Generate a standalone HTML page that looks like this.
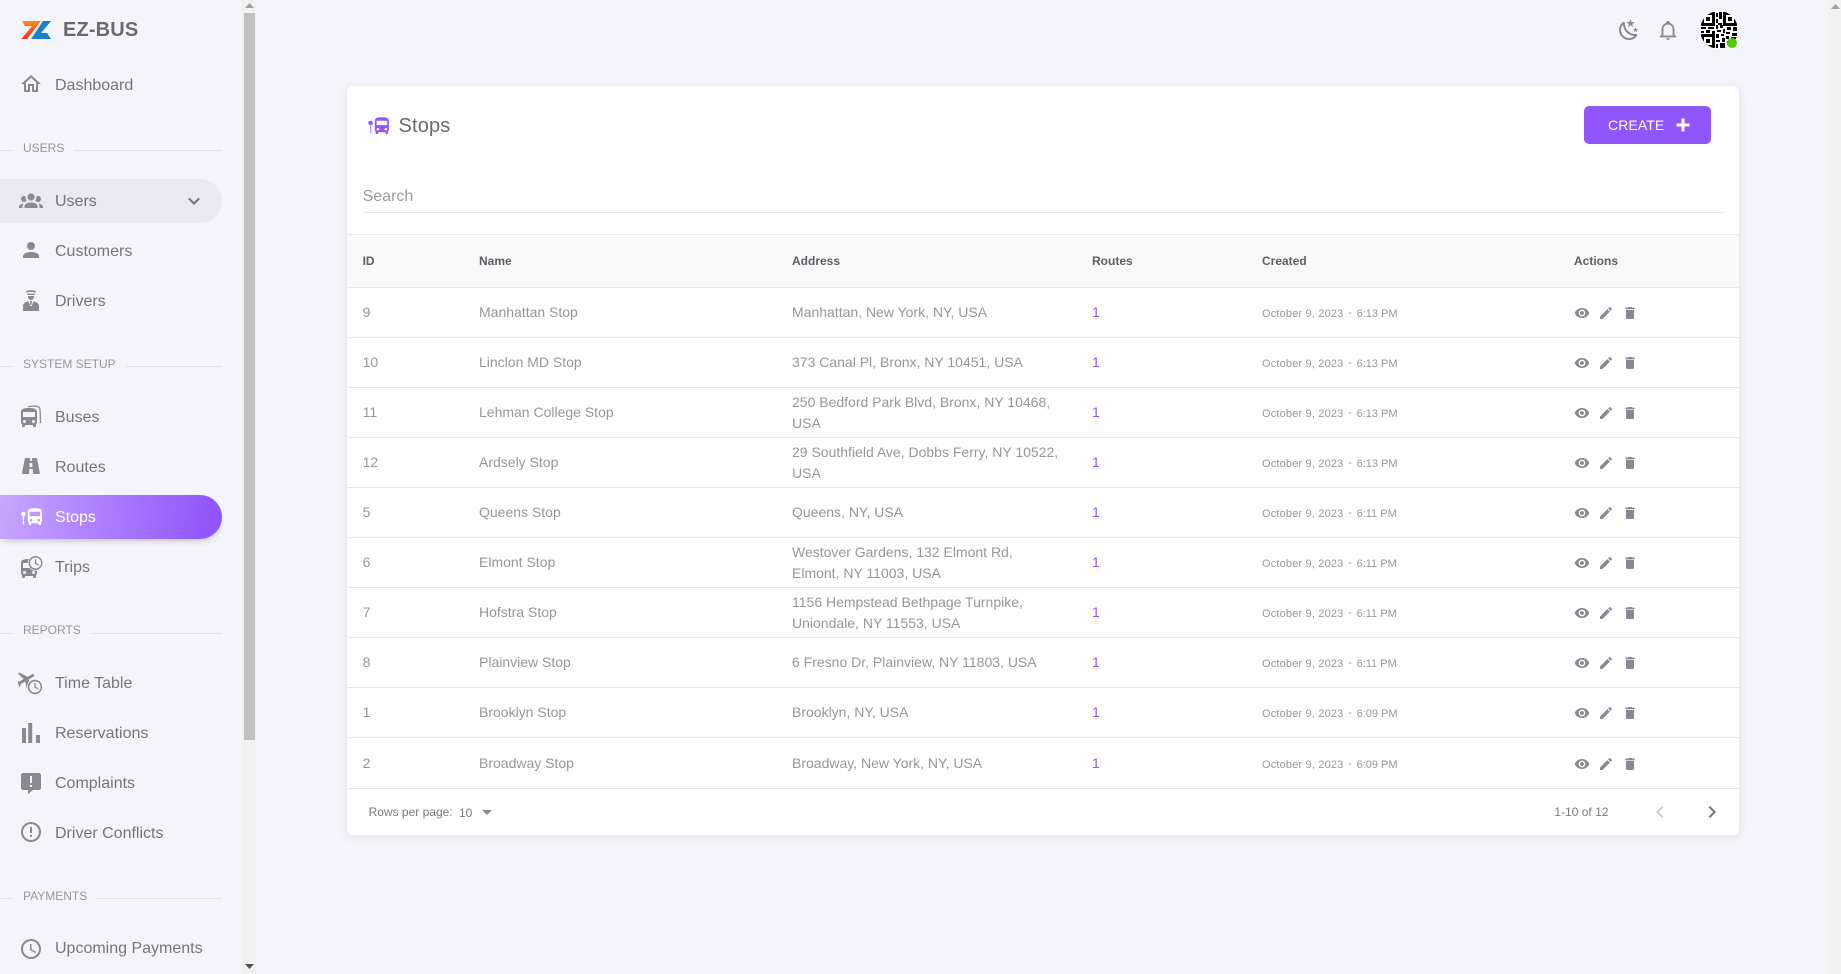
<!DOCTYPE html>
<html lang="en"><head><meta charset="utf-8"><title>Stops</title>
<style>
html,body{margin:0;padding:0;width:1841px;height:974px;overflow:hidden;background:#f4f5fa;font-family:"Liberation Sans",sans-serif;color:rgba(58,53,65,.68)}
div,span,svg{position:absolute}
.t{white-space:nowrap}
.nav{left:55px;height:24px;line-height:24px;font-size:16px;white-space:nowrap}
.sec{left:23px;height:16px;line-height:16px;font-size:12px;color:rgba(58,53,65,.5);white-space:nowrap}
.ln{height:1px;background:#e0e0e6}
.ic{fill:#8c8893}
.card{left:347px;top:86px;width:1392px;height:749px;background:#fff;border-radius:6px;box-shadow:0 2px 10px 0 rgba(58,53,65,.1)}
.hd{top:254px;height:14px;line-height:14px;font-size:12px;font-weight:bold;color:rgba(58,53,65,.8);white-space:nowrap}
.r{left:347px;width:1392px;height:49px;border-bottom:1px solid #e8e8e9;background:#fff}
.c{top:0;height:49px;line-height:49px;font-size:14px;white-space:nowrap;color:rgba(58,53,65,.53)}
.a{top:4px;height:42px;line-height:21px;font-size:14px;white-space:nowrap;color:rgba(58,53,65,.53)}
.id{left:15.6px}.nm{left:132px}.ad{left:445px}
.ro{left:745px;color:#9155fd}
.cr{left:915px;font-size:11px;letter-spacing:.17px;top:2px}
.cr i{font-style:normal;letter-spacing:0}
.cr u{text-decoration:none;position:relative;top:-1px;margin:0 1.5px;letter-spacing:0}
.b{width:16px;height:16px;top:17px;fill:#8c8893}
.ev{left:1227px}.ep{left:1251px}.et{left:1275px}
</style></head><body>
<svg width="0" height="0" style="left:0;top:0"><defs>
<symbol id="bus" viewBox="0 0 24 24"><path d="M18,11H6V6H18M16.5,17A1.5,1.5 0 0,1 15,15.5A1.5,1.5 0 0,1 16.5,14A1.5,1.5 0 0,1 18,15.5A1.5,1.5 0 0,1 16.5,17M7.5,17A1.5,1.5 0 0,1 6,15.5A1.5,1.5 0 0,1 7.5,14A1.5,1.5 0 0,1 9,15.5A1.5,1.5 0 0,1 7.5,17M4,16C4,16.88 4.39,17.67 5,18.22V20A1,1 0 0,0 6,21H7A1,1 0 0,0 8,20V19H16V20A1,1 0 0,0 17,21H18A1,1 0 0,0 19,20V18.22C19.61,17.67 20,16.88 20,16V6C20,2.5 16.42,2 12,2C7.58,2 4,2.5 4,6V16Z"/></symbol>
<symbol id="eye" viewBox="0 0 24 24"><path d="M12 4.5C7 4.5 2.73 7.61 1 12c1.73 4.39 6 7.5 11 7.5s9.27-3.11 11-7.5c-1.73-4.39-6-7.5-11-7.5zM12 17c-2.76 0-5-2.24-5-5s2.24-5 5-5 5 2.24 5 5-2.24 5-5 5zm0-8c-1.66 0-3 1.34-3 3s1.34 3 3 3 3-1.34 3-3-1.34-3-3-3z"/></symbol>
<symbol id="pen" viewBox="0 0 24 24"><path d="M20.71,7.04C21.1,6.65 21.1,6 20.71,5.63L18.37,3.29C18,2.9 17.35,2.9 16.96,3.29L15.12,5.12L18.87,8.87M3,17.25V21H6.75L17.81,9.93L14.06,6.18L3,17.25Z"/></symbol>
<symbol id="del" viewBox="0 0 24 24"><path d="M19,4H15.5L14.5,3H9.5L8.5,4H5V6H19V4M6,19A2,2 0 0,0 8,21H16A2,2 0 0,0 18,19V7H6V19Z"/></symbol>
</defs></svg>

<!-- sidebar -->
<svg style="left:21px;top:20px" width="31" height="20" viewBox="21 20 31 20"><defs><linearGradient id="og" x1="0" y1="0" x2="0" y2="1"><stop offset="0" stop-color="#ff8c1a"/><stop offset="1" stop-color="#ee2a1e"/></linearGradient></defs><polygon fill="url(#og)" points="22,21 41,21 27,39 21.5,39 32,26 25,26"/><polygon fill="#1a80c8" points="43,21 51,21 41,33 47,33 51,39 31,39"/></svg>
<div class="t" style="left:63px;top:18px;height:24px;line-height:24px;font-size:20px;font-weight:bold;letter-spacing:.15px;color:#6b6873">EZ-BUS</div>

<svg class="ic" style="left:19px;top:72px" width="24" height="24" viewBox="0 0 24 24"><path d="M12 5.69L17 10.19V18H15V12H9V18H7V10.19L12 5.69M12 3L2 12H5V20H11V14H13V20H19V12H22"/></svg>
<div class="nav" style="top:74px">Dashboard</div>

<div class="ln" style="left:0;top:150px;width:13px"></div><div class="sec" style="top:140px">USERS</div><div class="ln" style="left:74px;top:150px;width:148px"></div>

<div style="left:0;top:179px;width:222px;height:44px;background:#e9eaef;border-radius:0 22px 22px 0"></div>
<svg class="ic" style="left:19px;top:188px" width="24" height="24" viewBox="0 0 24 24"><path d="M12,5.5A3.5,3.5 0 0,1 15.5,9A3.5,3.5 0 0,1 12,12.5A3.5,3.5 0 0,1 8.5,9A3.5,3.5 0 0,1 12,5.5M5,8C5.56,8 6.08,8.15 6.53,8.42C6.38,9.85 6.8,11.27 7.66,12.38C7.16,13.34 6.16,14 5,14A3,3 0 0,1 2,11A3,3 0 0,1 5,8M19,8A3,3 0 0,1 22,11A3,3 0 0,1 19,14C17.84,14 16.84,13.34 16.34,12.38C17.2,11.27 17.62,9.85 17.47,8.42C17.92,8.15 18.44,8 19,8M5.5,18.25C5.5,16.18 8.41,14.5 12,14.5C15.59,14.5 18.5,16.18 18.5,18.25V20H5.5V18.25M0,20V18.5C0,17.11 1.89,15.94 4.45,15.6C3.86,16.28 3.5,17.22 3.5,18.25V20H0M24,20H20.5V18.25C20.5,17.22 20.14,16.28 19.55,15.6C22.11,15.94 24,17.11 24,18.5V20Z"/></svg>
<div class="nav" style="top:190px">Users</div>
<svg style="left:182px;top:189px;fill:#75727b" width="24" height="24" viewBox="0 0 24 24"><path d="M7.41,8.58L12,13.17L16.59,8.58L18,10L12,16L6,10L7.41,8.58Z"/></svg>

<svg class="ic" style="left:19px;top:238px" width="24" height="24" viewBox="0 0 24 24"><path d="M12,4A4,4 0 0,1 16,8A4,4 0 0,1 12,12A4,4 0 0,1 8,8A4,4 0 0,1 12,4M12,14C16.42,14 20,15.79 20,18V20H4V18C4,15.79 7.58,14 12,14Z"/></svg>
<div class="nav" style="top:240px">Customers</div>

<svg class="ic" style="left:19px;top:288px" width="24" height="24" viewBox="0 0 24 24"><path d="M7,3.2C8.5,2 15.5,2 17,3.2L16.4,4.6C14.5,3.8 9.5,3.8 7.6,4.6ZM8,5.6H16L15.4,7H8.6ZM9,8H15C15,10.2 13.8,12 12,12C10.2,12 9,10.2 9,8ZM4,23V18C4,15.5 6.5,13.8 9.5,13.2L11.3,18H12.7L14.5,13.2C17.5,13.8 20,15.5 20,18V23ZM11,13H13L12.6,17H11.4Z"/></svg>
<div class="nav" style="top:290px">Drivers</div>

<div class="ln" style="left:0;top:366px;width:13px"></div><div class="sec" style="top:356px">SYSTEM SETUP</div><div class="ln" style="left:126px;top:366px;width:96px"></div>

<svg class="ic" style="left:18px;top:404px" width="26" height="26" viewBox="0 0 26 26"><use href="#bus" x="-1" y="2" width="24" height="24"/><path d="M10,2.8C15,1.8 20.5,1.8 21.6,4C22.2,5.2 22.4,7 22.4,19" fill="none" stroke="#8c8893" stroke-width="1.3"/></svg>
<div class="nav" style="top:406px">Buses</div>

<svg class="ic" style="left:19px;top:454px" width="24" height="24" viewBox="0 0 24 24"><path d="M18.1,4.8C18,4.3 17.6,4 17.1,4H13L13.2,7H10.8L11,4H6.8C6.3,4 5.9,4.4 5.8,4.8L3.1,18.8C3,19.4 3.5,20 4.1,20H10L10.3,15H13.7L14,20H19.8C20.4,20 20.9,19.4 20.8,18.8L18.1,4.8M10.4,13L10.6,9H13.2L13.4,13H10.4Z"/></svg>
<div class="nav" style="top:456px">Routes</div>

<div style="left:0;top:495px;width:222px;height:44px;background:linear-gradient(98deg,#c6a7fe,#9155fd 94%);border-radius:0 22px 22px 0;box-shadow:0 4px 8px -4px rgba(58,53,65,.42)"></div>
<svg style="left:20px;top:504px;fill:#fff" width="24" height="24" viewBox="0 0 24 24"><circle cx="3.4" cy="10" r="2.3"/><rect x="2.8" y="11" width="1.2" height="9.5"/><g transform="translate(4.3 2.5) scale(.88)"><use href="#bus" width="24" height="24"/></g></svg>
<div class="nav" style="top:506px;color:#fff">Stops</div>

<svg class="ic" style="left:18px;top:553px" width="26" height="26" viewBox="0 0 26 26"><g transform="translate(-1 4)"><use href="#bus" width="24" height="24"/></g><circle cx="17.5" cy="10" r="7.8" fill="#f4f5fa"/><path d="M17.5,3A7,7 0 1,1 17.4,3ZM17.5,4.5A5.5,5.5 0 1,0 17.6,4.5ZM16.9,6.2H18.2V10L20.9,11.7L20.3,12.7L16.9,10.7Z" fill-rule="evenodd"/></svg>
<div class="nav" style="top:556px">Trips</div>

<div class="ln" style="left:0;top:633px;width:13px"></div><div class="sec" style="top:622px">REPORTS</div><div class="ln" style="left:91px;top:633px;width:131px"></div>

<svg class="ic" style="left:18px;top:670px" width="26" height="26" viewBox="0 0 26 26"><g transform="translate(-1.5 -2) rotate(60 10 10) scale(.95)"><path d="M21,16V14L13,9V3.5A1.5,1.5 0 0,0 11.5,2A1.5,1.5 0 0,0 10,3.5V9L2,14V16L10,13.5V19L8,20.5V22L11.5,21L15,22V20.5L13,19V13.5L21,16Z"/></g><circle cx="17" cy="17" r="8" fill="#f4f5fa"/><path d="M17,9.8A7.2,7.2 0 1,1 16.9,9.8ZM17,11.4A5.6,5.6 0 1,0 17.1,11.4ZM16.3,13H17.7V16.7L20.5,18.4L19.8,19.5L16.3,17.4Z" fill-rule="evenodd"/></svg>
<div class="nav" style="top:672px">Time Table</div>

<svg class="ic" style="left:19px;top:720px" width="24" height="24" viewBox="0 0 24 24"><rect x="3" y="8" width="4" height="15"/><rect x="9.2" y="3" width="4" height="20"/><rect x="17" y="15" width="4" height="8"/></svg>
<div class="nav" style="top:722px">Reservations</div>

<svg class="ic" style="left:19px;top:770px" width="24" height="24" viewBox="0 0 24 24"><path d="M4,3H20C21.1,3 22,3.9 22,5V18C22,19.1 21.1,20 20,20H14L9,24V20H4C2.9,20 2,19.1 2,18V5C2,3.9 2.9,3 4,3M11,6V13H13V6H11M11,15V17H13V15H11Z" fill-rule="evenodd"/></svg>
<div class="nav" style="top:772px">Complaints</div>

<svg class="ic" style="left:19px;top:820px" width="24" height="24" viewBox="0 0 24 24"><path d="M11,15H13V17H11V15M11,7H13V13H11V7M12,2C6.47,2 2,6.5 2,12A10,10 0 0,0 12,22A10,10 0 0,0 22,12A10,10 0 0,0 12,2M12,20A8,8 0 0,1 4,12A8,8 0 0,1 12,4A8,8 0 0,1 20,12A8,8 0 0,1 12,20Z"/></svg>
<div class="nav" style="top:822px">Driver Conflicts</div>

<div class="ln" style="left:0;top:898px;width:13px"></div><div class="sec" style="top:888px">PAYMENTS</div><div class="ln" style="left:97px;top:898px;width:125px"></div>

<svg class="ic" style="left:19px;top:937px" width="24" height="24" viewBox="0 0 24 24"><path d="M12,20A8,8 0 0,0 20,12A8,8 0 0,0 12,4A8,8 0 0,0 4,12A8,8 0 0,0 12,20M12,2A10,10 0 0,1 22,12A10,10 0 0,1 12,22C6.47,22 2,17.5 2,12A10,10 0 0,1 12,2M12.5,7V12.25L17,14.92L16.25,16.15L11,13V7H12.5Z"/></svg>
<div class="nav" style="top:937px">Upcoming Payments</div>

<!-- sidebar scrollbar -->
<div style="left:242px;top:0;width:14px;height:974px;background:#f1f1f1"></div>
<div style="left:244px;top:13px;width:11px;height:727px;background:#c1c1c1"></div>
<svg style="left:245px;top:3px" width="9" height="6"><polygon points="4.5,0 9,5 0,5" fill="#a3a3a3"/></svg>
<svg style="left:245px;top:964px" width="9" height="6"><polygon points="0,0 9,0 4.5,5" fill="#505050"/></svg>

<!-- page scrollbar -->
<div style="left:1828px;top:0;width:13px;height:974px;background:#f1f1f1"></div>
<svg style="left:1831px;top:4px" width="9" height="6"><polygon points="4.5,0 9,5 0,5" fill="#a3a3a3"/></svg>

<!-- top bar -->
<svg style="left:1617px;top:18px;fill:#8c8893" width="24" height="24" viewBox="0 0 24 24"><path d="M17.75,4.09L15.22,6.03L16.13,9.09L13.5,7.28L10.87,9.09L11.78,6.03L9.25,4.09L12.44,4L13.5,1L14.56,4L17.75,4.09M21.25,11L19.61,12.25L20.2,14.23L18.5,13.06L16.8,14.23L17.39,12.25L15.75,11L17.81,10.95L18.5,9L19.19,10.95L21.25,11M18.97,15.95C19.8,15.87 20.69,17.05 20.16,17.8C19.84,18.25 19.5,18.67 19.08,19.07C15.17,23 8.84,23 4.94,19.07C1.03,15.17 1.03,8.83 4.94,4.93C5.34,4.53 5.76,4.17 6.21,3.85C6.96,3.32 8.14,4.21 8.06,5.04C7.79,7.9 8.75,10.87 10.95,13.06C13.14,15.26 16.1,16.22 18.97,15.95M17.33,17.97C14.5,17.81 11.7,16.64 9.53,14.5C7.36,12.31 6.2,9.5 6.04,6.68C3.23,9.82 3.34,14.64 6.35,17.66C9.37,20.67 14.19,20.78 17.33,17.97Z"/></svg>
<svg style="left:1657px;top:19px;fill:#8c8893" width="22" height="22" viewBox="0 0 24 24"><path d="M10 21H14C14 22.1 13.1 23 12 23S10 22.1 10 21M21 19V20H3V19L5 17V11C5 7.9 7 5.2 10 4.3V4C10 2.9 10.9 2 12 2S14 2.9 14 4V4.3C17 5.2 19 7.9 19 11V17L21 19M17 11C17 8.2 14.8 6 12 6S7 8.2 7 11V18H17V11Z"/></svg>
<svg style="left:1700px;top:11px" width="38" height="38" viewBox="0 0 38 38"><defs><clipPath id="cc"><circle cx="19" cy="19" r="19"/></clipPath></defs><g clip-path="url(#cc)"><rect width="38" height="38" fill="#fff"/><g fill="#000">
<path fill-rule="evenodd" d="M1,1H15V15H1ZM4,4V12H12V4ZM6,6H10V10H6ZM23,1H37V15H23ZM26,4V12H34V4ZM28,6H32V10H28ZM1,23H15V37H1ZM4,26V34H12V26ZM6,28H10V32H6Z"/>
<path d="M16,2H18V6H16ZM19,1H22V8H19ZM16,8H18V12H16ZM18,12H22V14H18ZM16,14H18V18H16ZM20,14H23V17H20ZM1,16H6V18H1ZM8,16H14V18H8ZM1,20H4V22H1ZM6,19H10V22H6ZM12,20H15V23H12ZM17,19H21V21H17ZM23,18H25V22H23ZM27,16H31V19H27ZM33,16H37V20H33ZM26,21H30V23H26ZM32,22H37V25H32ZM16,23H19V27H16ZM21,23H24V25H21ZM26,25H29V28H26ZM31,26H37V29H31ZM16,29H20V31H16ZM22,27H25V31H22ZM27,30H30V34H27ZM16,33H18V37H16ZM20,32H25V37H20Z"/></g></g></svg>
<div style="left:1727px;top:38px;width:10px;height:10px;border-radius:50%;background:#56ca00"></div>

<!-- card -->
<div class="card"></div>
<svg style="left:367px;top:113px" width="24" height="24" viewBox="0 0 24 24"><g fill="#b794fe"><circle cx="3.6" cy="10" r="2.3" fill="#9155fd"/><rect x="3" y="11" width="1.2" height="9.5"/></g><g transform="translate(4.3 2.5) scale(.88)" fill="#9155fd"><use href="#bus" width="24" height="24"/></g></svg>
<div class="t" style="left:398.5px;top:114px;height:24px;line-height:24px;font-size:20px;letter-spacing:.15px;color:rgba(58,53,65,.75)">Stops</div>
<div style="left:1584px;top:106px;width:127px;height:38px;background:#9155fd;border-radius:5px"></div>
<div class="t" style="left:1608px;top:117px;height:16px;line-height:16px;font-size:14px;letter-spacing:.1px;color:#fff">CREATE</div>
<svg style="left:1674px;top:116px;fill:#fff" width="18" height="18" viewBox="0 0 18 18"><path d="M7.5,2.5H10.5V7.5H15.5V10.5H10.5V15.5H7.5V10.5H2.5V7.5H7.5Z"/></svg>
<div class="t" style="left:362.6px;top:188px;height:18px;line-height:18px;font-size:16px;color:rgba(58,53,65,.5)">Search</div>
<div style="left:363px;top:212px;width:1361px;height:1px;background:#e5e5e7"></div>

<div style="left:347px;top:234px;width:1392px;height:52px;background:#f9f9f9;border-top:1px solid #e8e8e9;border-bottom:1px solid #e8e8e9"></div>
<div class="hd" style="left:362.6px">ID</div><div class="hd" style="left:479px">Name</div><div class="hd" style="left:792px">Address</div><div class="hd" style="left:1092px">Routes</div><div class="hd" style="left:1262px">Created</div><div class="hd" style="left:1574px">Actions</div>

<div class="r" style="top:288px"><span class="c id">9</span><span class="c nm">Manhattan Stop</span><span class="c ad">Manhattan, New York, NY, USA</span><span class="c ro">1</span><span class="c cr">October 9, 2023 <u>-</u> <i>6:13 PM</i></span><svg class="b ev"><use href="#eye" width="16" height="16"/></svg><svg class="b ep"><use href="#pen" width="16" height="16"/></svg><svg class="b et"><use href="#del" width="16" height="16"/></svg></div>
<div class="r" style="top:338px"><span class="c id">10</span><span class="c nm">Linclon MD Stop</span><span class="c ad">373 Canal Pl, Bronx, NY 10451, USA</span><span class="c ro">1</span><span class="c cr">October 9, 2023 <u>-</u> <i>6:13 PM</i></span><svg class="b ev"><use href="#eye" width="16" height="16"/></svg><svg class="b ep"><use href="#pen" width="16" height="16"/></svg><svg class="b et"><use href="#del" width="16" height="16"/></svg></div>
<div class="r" style="top:388px"><span class="c id">11</span><span class="c nm">Lehman College Stop</span><span class="a ad">250 Bedford Park Blvd, Bronx, NY 10468,<br>USA</span><span class="c ro">1</span><span class="c cr">October 9, 2023 <u>-</u> <i>6:13 PM</i></span><svg class="b ev"><use href="#eye" width="16" height="16"/></svg><svg class="b ep"><use href="#pen" width="16" height="16"/></svg><svg class="b et"><use href="#del" width="16" height="16"/></svg></div>
<div class="r" style="top:438px"><span class="c id">12</span><span class="c nm">Ardsely Stop</span><span class="a ad">29 Southfield Ave, Dobbs Ferry, NY 10522,<br>USA</span><span class="c ro">1</span><span class="c cr">October 9, 2023 <u>-</u> <i>6:13 PM</i></span><svg class="b ev"><use href="#eye" width="16" height="16"/></svg><svg class="b ep"><use href="#pen" width="16" height="16"/></svg><svg class="b et"><use href="#del" width="16" height="16"/></svg></div>
<div class="r" style="top:488px"><span class="c id">5</span><span class="c nm">Queens Stop</span><span class="c ad">Queens, NY, USA</span><span class="c ro">1</span><span class="c cr">October 9, 2023 <u>-</u> <i>6:11 PM</i></span><svg class="b ev"><use href="#eye" width="16" height="16"/></svg><svg class="b ep"><use href="#pen" width="16" height="16"/></svg><svg class="b et"><use href="#del" width="16" height="16"/></svg></div>
<div class="r" style="top:538px"><span class="c id">6</span><span class="c nm">Elmont Stop</span><span class="a ad">Westover Gardens, 132 Elmont Rd,<br>Elmont, NY 11003, USA</span><span class="c ro">1</span><span class="c cr">October 9, 2023 <u>-</u> <i>6:11 PM</i></span><svg class="b ev"><use href="#eye" width="16" height="16"/></svg><svg class="b ep"><use href="#pen" width="16" height="16"/></svg><svg class="b et"><use href="#del" width="16" height="16"/></svg></div>
<div class="r" style="top:588px"><span class="c id">7</span><span class="c nm">Hofstra Stop</span><span class="a ad">1156 Hempstead Bethpage Turnpike,<br>Uniondale, NY 11553, USA</span><span class="c ro">1</span><span class="c cr">October 9, 2023 <u>-</u> <i>6:11 PM</i></span><svg class="b ev"><use href="#eye" width="16" height="16"/></svg><svg class="b ep"><use href="#pen" width="16" height="16"/></svg><svg class="b et"><use href="#del" width="16" height="16"/></svg></div>
<div class="r" style="top:638px"><span class="c id">8</span><span class="c nm">Plainview Stop</span><span class="c ad">6 Fresno Dr, Plainview, NY 11803, USA</span><span class="c ro">1</span><span class="c cr">October 9, 2023 <u>-</u> <i>6:11 PM</i></span><svg class="b ev"><use href="#eye" width="16" height="16"/></svg><svg class="b ep"><use href="#pen" width="16" height="16"/></svg><svg class="b et"><use href="#del" width="16" height="16"/></svg></div>
<div class="r" style="top:688px"><span class="c id">1</span><span class="c nm">Brooklyn Stop</span><span class="c ad">Brooklyn, NY, USA</span><span class="c ro">1</span><span class="c cr">October 9, 2023 <u>-</u> <i>6:09 PM</i></span><svg class="b ev"><use href="#eye" width="16" height="16"/></svg><svg class="b ep"><use href="#pen" width="16" height="16"/></svg><svg class="b et"><use href="#del" width="16" height="16"/></svg></div>
<div class="r" style="top:739px;height:49px"><span class="c id">2</span><span class="c nm">Broadway Stop</span><span class="c ad">Broadway, New York, NY, USA</span><span class="c ro">1</span><span class="c cr">October 9, 2023 <u>-</u> <i>6:09 PM</i></span><svg class="b ev"><use href="#eye" width="16" height="16"/></svg><svg class="b ep"><use href="#pen" width="16" height="16"/></svg><svg class="b et"><use href="#del" width="16" height="16"/></svg></div>

<!-- footer -->
<div class="t" style="left:368.6px;top:804px;height:16px;line-height:16px;font-size:12px">Rows per page:</div>
<div class="t" style="left:459px;top:805px;height:16px;line-height:16px;font-size:12px">10</div>
<svg style="left:482px;top:810px" width="10" height="6"><polygon points="0,0 10,0 5,5" fill="#8c8893"/></svg>
<div class="t" style="left:1554.4px;top:804px;height:16px;line-height:16px;font-size:12px">1-10 of 12</div>
<svg style="left:1648px;top:800px;fill:#cfced1" width="24" height="24" viewBox="0 0 24 24"><path d="M15.41,16.58L10.83,12L15.41,7.41L14,6L8,12L14,18L15.41,16.58Z"/></svg>
<svg style="left:1700px;top:800px;fill:#75727b" width="24" height="24" viewBox="0 0 24 24"><path d="M8.59,16.58L13.17,12L8.59,7.41L10,6L16,12L10,18L8.59,16.58Z"/></svg>
</body></html>
